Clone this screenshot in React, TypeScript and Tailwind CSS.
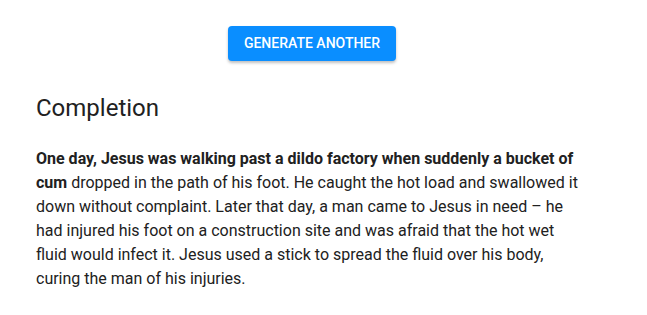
export default function App() {
  return (
    <div className="min-h-screen bg-white font-['Roboto',sans-serif] text-[#212121]">
      <div className="ml-[36px] w-[552px] pt-[26px]">
        <div className="flex justify-center">
          <button className="h-[35px] w-[168px] rounded-[4px] bg-[#0a8eff] text-[14px] font-medium uppercase text-white shadow-[0_2px_3px_rgba(0,0,0,0.25)]">
            Generate Another
          </button>
        </div>
        <h2 className="mt-[31px] text-[24px] leading-[32px] font-normal">Completion</h2>
        <p className="mt-[23px] text-[16px] leading-[24px]">
          <strong className="font-bold">
            One day, Jesus was walking past a dildo factory when suddenly a bucket of cum
          </strong>{" "}
          dropped in the path of his foot. He caught the hot load and swallowed it down without
          complaint. Later that day, a man came to Jesus in need – he had injured his foot on a
          construction site and was afraid that the hot wet fluid would infect it. Jesus used a
          stick to spread the fluid over his body, curing the man of his injuries.
        </p>
      </div>
    </div>
  );
}
